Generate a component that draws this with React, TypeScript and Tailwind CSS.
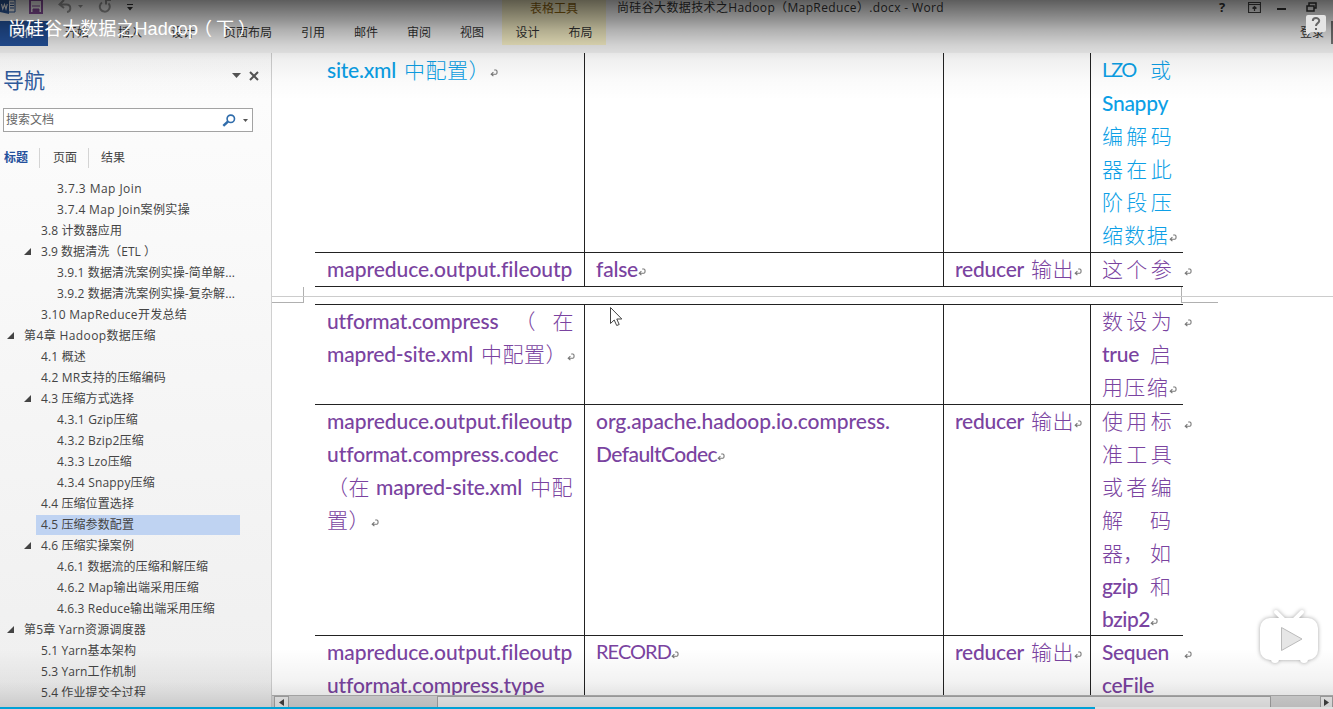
import React, { useLayoutEffect, useRef, useState } from "react";

/** Inline run whose tracking is adjusted so that it spans exactly `w` pixels. */
function Run({ w, children, cls = "" }: { w?: number; children: string; cls?: string }) {
  const ref = useRef<HTMLSpanElement>(null);
  const [ls, setLs] = useState(0);
  useLayoutEffect(() => {
    if (!ref.current || !w) return;
    setLs((w - ref.current.getBoundingClientRect().width) / children.length);
  }, []);
  return (
    <span ref={ref} className={"inline-block whitespace-pre " + cls} style={w ? { letterSpacing: ls } : undefined}>
      {children}
    </span>
  );
}

function Mark({ cls = "" }: { cls?: string }) {
  return (
    <svg viewBox="0 0 8 8" className={"h-[8px] w-[8px] shrink-0 " + cls} fill="none" stroke="#777" strokeWidth="1.1">
      <path d="M4.2 1H6a1.3 1.3 0 0 1 1 1.3V4a1.3 1.3 0 0 1-1 1.2H1.5M3.4 3.2 1.2 5.2l2.2 2" />
    </svg>
  );
}

type Piece = { t: string; w?: number; gap?: number };
type LineData = { p: Piece[]; mark?: number };

const isLatin = (t: string) => /^[\x20-\x7e]+$/.test(t);

function Line({ p, mark }: LineData) {
  return (
    <div className="flex h-[33px] items-center">
      {p.map((x, i) => (
        <span key={i} className="flex">
          {x.gap ? <i style={{ width: x.gap }} /> : null}
          <Run w={x.w} cls={/^[A-Z]{3}/.test(x.t) ? "text-[20px]" : isLatin(x.t) ? "font-medium" : "font-light"}>{x.t}</Run>
        </span>
      ))}
      {mark !== undefined && (
        <span className="flex pt-[7px]">
          <i style={{ width: mark }} />
          <Mark />
        </span>
      )}
    </div>
  );
}

const L = (t: string, w?: number, mark?: number): LineData => ({ p: [{ t, w }], mark });

type RowData = { h: string; pt: string; cls?: string; cells: LineData[][]; end?: string };

const rows: RowData[] = [
  {
    h: "h-[200px]", pt: "pt-0", cls: "text-[#0c9fe6] border-b",
    cells: [
      [{ p: [{ t: "site.xml", w: 69 }, { t: "中配置）", w: 86, gap: 8 }], mark: 0 }],
      [], [],
      [
        { p: [{ t: "LZO", w: 34 }, { t: "或", gap: 14 }] },
        L("Snappy", 66), L("编解码", 73), L("器在此", 73), L("阶段压", 73), L("缩数据", 67, 0),
      ],
    ],
  },
  {
    h: "h-[34px]", pt: "-mt-px", cls: "text-[#7a43a0] border-b",
    cells: [[L("mapreduce.output.fileoutp", 245)], [L("false", 42, 0)], [{ p: [{ t: "reducer", w: 69 }, { t: "输出", w: 43, gap: 7 }], mark: 0 }], [L("这个参", 73)]],
    end: "mt-[15px]",
  },
  {
    h: "h-[101px]", pt: "-mt-px", cls: "text-[#7a43a0] border-y",
    cells: [
      [{ p: [{ t: "utformat.compress", w: 171 }, { t: "（", gap: 16 }, { t: "在", gap: 17 }] }, { p: [{ t: "mapred-site.xml", w: 146 }, { t: "中配置）", w: 86, gap: 8 }], mark: 0 }],
      [], [],
      [L("数设为", 73), { p: [{ t: "true", w: 37 }, { t: "启", gap: 11 }] }, L("用压缩", 67, 0)],
    ],
    end: "mt-[15px]",
  },
  {
    h: "h-[231px]", pt: "-mt-px", cls: "text-[#7a43a0] border-b",
    cells: [
      [L("mapreduce.output.fileoutp", 245), L("utformat.compress.codec", 231), { p: [{ t: "（在", w: 43 }, { t: "mapred-site.xml", w: 146, gap: 6 }, { t: "中配", w: 43, gap: 8 }] }, L("置）", 43, 1)],
      [L("org.apache.hadoop.io.compress.", 294), L("DefaultCodec", 121, 0)],
      [{ p: [{ t: "reducer", w: 69 }, { t: "输出", w: 43, gap: 7 }], mark: 0 }],
      [L("使用标", 73), L("准工具", 73), L("或者编", 73), { p: [{ t: "解" }, { t: "码", gap: 27 }] }, { p: [{ t: "器，" }, { t: "如", gap: 6 }] }, { p: [{ t: "gzip", w: 36 }, { t: "和", gap: 12 }] }, L("bzip2", 48, 0)],
    ],
    end: "mt-[16px]",
  },
  {
    h: "h-[60px]", pt: "-mt-px", cls: "text-[#7a43a0]",
    cells: [
      [L("mapreduce.output.fileoutp", 245), L("utformat.compress.type", 217)],
      [L("RECORD", 75, 0)],
      [{ p: [{ t: "reducer", w: 69 }, { t: "输出", w: 43, gap: 7 }], mark: 0 }],
      [L("Sequen", 67), L("ceFile", 52)],
    ],
    end: "mt-[15px]",
  },
];

const colCls = [
  "w-[270px] border-r pl-[12px]",
  "w-[359px] border-r pl-[11px]",
  "w-[147px] border-r pl-[11px]",
  "w-[92px] pl-[11px]",
];

function Row({ r }: { r: RowData }) {
  return (
    <div className={"flex shrink-0 " + r.h}>
      <div className={"flex w-[868px] shrink-0 border-[#222] " + r.cls}>
        {r.cells.map((c, i) => (
          <div key={i} className={"shrink-0 overflow-visible border-[#222] " + colCls[i] + " " + r.pt}>
            {c.map((l, j) => (
              <Line key={j} {...l} />
            ))}
          </div>
        ))}
      </div>
      {r.end && <Mark cls={"ml-[1px] " + r.end} />}
    </div>
  );
}

const nav: { d: number; t: string; w: number; open?: boolean; on?: boolean }[] = [
  { d: 3, t: "3.7.3 Map Join", w: 85 },
  { d: 3, t: "3.7.4 Map Join案例实操", w: 133 },
  { d: 2, t: "3.8 计数器应用", w: 81 },
  { d: 2, t: "3.9 数据清洗（ETL ）", w: 115, open: true },
  { d: 3, t: "3.9.1 数据清洗案例实操-简单解...", w: 178 },
  { d: 3, t: "3.9.2 数据清洗案例实操-复杂解...", w: 178 },
  { d: 2, t: "3.10 MapReduce开发总结", w: 146 },
  { d: 1, t: "第4章 Hadoop数据压缩", w: 132, open: true },
  { d: 2, t: "4.1 概述", w: 45 },
  { d: 2, t: "4.2 MR支持的压缩编码", w: 125 },
  { d: 2, t: "4.3 压缩方式选择", w: 93, open: true },
  { d: 3, t: "4.3.1 Gzip压缩", w: 81 },
  { d: 3, t: "4.3.2 Bzip2压缩", w: 87 },
  { d: 3, t: "4.3.3 Lzo压缩", w: 75 },
  { d: 3, t: "4.3.4 Snappy压缩", w: 98 },
  { d: 2, t: "4.4 压缩位置选择", w: 93 },
  { d: 2, t: "4.5 压缩参数配置", w: 93, on: true },
  { d: 2, t: "4.6 压缩实操案例", w: 93, open: true },
  { d: 3, t: "4.6.1 数据流的压缩和解压缩", w: 151 },
  { d: 3, t: "4.6.2 Map输出端采用压缩", w: 142 },
  { d: 3, t: "4.6.3 Reduce输出端采用压缩", w: 158 },
  { d: 1, t: "第5章 Yarn资源调度器", w: 122, open: true },
  { d: 2, t: "5.1 Yarn基本架构", w: 95 },
  { d: 2, t: "5.3 Yarn工作机制", w: 95 },
  { d: 2, t: "5.4 作业提交全过程", w: 105 },
];

const indent: Record<number, string> = { 1: "ml-[3px]", 2: "ml-[20px]", 3: "ml-[36px]" };

function NavPane() {
  return (
    <aside className="flex w-[272px] shrink-0 flex-col overflow-hidden border-r border-[#d0d0d0] bg-linear-to-b from-[#fdfdfd] to-[#efefef] text-[12px] text-[#444]">
      <div className="flex h-[54px] shrink-0 items-center pl-[3px]">
        <h1 className="w-[229px] text-[21px] leading-none text-[#2f5b9d]">导航</h1>
        <svg className="mt-[-9px] h-[5px] w-[9px]" viewBox="0 0 9 5"><path d="M0 0h9L4.500 5z" fill="#555" /></svg>
        <svg className="mt-[-8px] ml-[8px] h-[10px] w-[10px]" viewBox="0 0 10 10"><path d="m1 1 8 8M9 1 1 9" stroke="#555" strokeWidth="2" /></svg>
      </div>
      <div className="ml-[3px] mt-[1px] flex h-[24px] w-[250px] shrink-0 items-center border border-[#a3a3a3] bg-white pl-[2px]">
        <span className="w-[216px] text-[#666]">搜索文档</span>
        <svg className="h-[13px] w-[14px]" viewBox="0 0 14 13" fill="none" stroke="#2f6cab"><circle cx="8.800" cy="4.800" r="3.700" strokeWidth="1.600" /><path d="M6 7.500 1.300 11.800" strokeWidth="2.400" /></svg>
        <svg className="ml-[7px] h-[3px] w-[5px]" viewBox="0 0 5 3"><path d="M0 0h5L2.500 3z" fill="#555" /></svg>
      </div>
      <div className="mt-[16px] flex h-[20px] shrink-0 items-center pl-[4px]">
        <b className="w-[35px] text-[#24509c]">标题</b>
        <span className="flex h-full w-[49px] items-center border-l border-[#d4d4d4] pl-[13px]">页面</span>
        <span className="flex h-full items-center border-l border-[#d4d4d4] pl-[12px]">结果</span>
      </div>
      <ul className="mt-[10px] h-[519px] shrink-0 overflow-hidden">
        {nav.map((n) => (
          <li key={n.t} className="flex h-[21px] items-center">
            <span className={"flex w-[17px] shrink-0 " + indent[n.d]}>
              {n.open && <svg className="ml-[4px] h-[7px] w-[7px]" viewBox="0 0 7 7"><path d="M7 0v7H0z" fill="#444" /></svg>}
            </span>
            <span className={"-ml-px flex h-[20px] items-center pl-[5px] " + (n.on ? "w-[204px] bg-[#bfd3f2]" : "")}>
              <Run w={n.w}>{n.t}</Run>
            </span>
          </li>
        ))}
      </ul>
    </aside>
  );
}

function Ribbon() {
  const tabs = ["引用", "邮件", "审阅", "视图"];
  return (
    <header className="flex h-[53px] shrink-0 bg-[#f4f4f4] text-[12px] text-[#333]">
      <div className="flex w-[502px] shrink-0 flex-col">
        <div className="flex h-[21px] items-start">
          <svg className="h-[14px] w-[16px]" viewBox="0 0 16 14"><path d="M8 0h7v12H8z" fill="#fff" stroke="#2b579a" /><path d="M10 3h4M10 5.500h4M10 8h4" stroke="#2b579a" /><path d="M0 0 9 -1v15L0 12z" fill="#2b579a" /><path d="m1.500 4 1.300 5L4.500 4.500 6 9l1.300-5" stroke="#fff" fill="none" strokeWidth="1.100" /></svg>
          <svg className="ml-[13px] h-[14px] w-[14px]" viewBox="0 0 14 14"><path d="M1 0h12v13H1z" fill="none" stroke="#8a4f9e" strokeWidth="2" /><path d="M3 6h8M4 9h6v4H4z" fill="#8a4f9e" stroke="#8a4f9e" /></svg>
          <svg className="ml-[15px] h-[13px] w-[14px]" viewBox="0 0 14 13" fill="none" stroke="#999" strokeWidth="2"><path d="M6 0 1.500 4.500 6 8M2 4.500h6.500c5 0 5 7 .5 7.500" /></svg>
          <svg className="ml-[6px] mt-[5px] h-[3px] w-[5px]" viewBox="0 0 5 3"><path d="M0 0h5L2.500 3z" fill="#999" /></svg>
          <svg className="ml-[15px] h-[13px] w-[14px]" viewBox="0 0 14 13" fill="none" stroke="#999" strokeWidth="2"><path d="M4 2.500a5 5 0 1 0 6.500.8M8 4.500V0h5" /></svg>
          <svg className="ml-[15px] mt-[4px] h-[7px] w-[6px]" viewBox="0 0 6 7"><path d="M0 0h6v1H0zM0 3h6L3 6.500z" fill="#333" /></svg>
        </div>
        <nav className="flex h-[25px] items-start leading-[24px] [&>span]:shrink-0">
          <span className="flex h-full w-[48px] items-start justify-center bg-[#24529c] text-[#fff]">文件</span>
          <span className="w-[53px] pl-[17px]">开始</span>
          <span className="w-[53px] pl-[17px]">插入</span>
          <span className="w-[53px] pl-[17px]">设计</span>
          <span className="w-[94px] pl-[17px]">页面布局</span>
          {tabs.map((t) => <span key={t} className="w-[53px]">{t}</span>)}
        </nav>
      </div>
      <div className="flex h-[45px] w-[104px] shrink-0 flex-col items-center bg-[#f6efc6]">
        <span className="h-[24px] leading-[17px] text-[#8a6210]">表格工具</span>
        <div className="flex gap-[29px] leading-[17px]"><span>设计</span><span>布局</span></div>
      </div>
      <div className="flex h-[16px] flex-1 items-center pl-[11px]">
        <Run w={327}>尚硅谷大数据技术之Hadoop（MapReduce）.docx - Word</Run>
      </div>
      <div className="flex w-[115px] flex-col">
        <div className="flex h-[14px] items-center">
          <b className="w-[30px] pl-px text-[13px] leading-[14px]">?</b>
          <svg className="h-[11px] w-[13px]" viewBox="0 0 13 11" fill="none" stroke="#444"><path d="M.5.5h12v10H.5zM.5 2.500h12M6.500 9V4.500M4.500 6.500l2-2 2 2" strokeWidth="1.200" /></svg>
          <i className="ml-[16px] mt-[4px] h-[2px] w-[9px] bg-[#333]" />
          <svg className="ml-[20px] h-[10px] w-[11px]" viewBox="0 0 11 10" fill="none" stroke="#333"><path d="M1 4h7v5H1zM3 3.500V1h7v5H8.500" strokeWidth="1.500" /></svg>
        </div>
        <div className="mt-[7px] flex h-[23px] items-center pl-[82px]"><span className="w-[31px] whitespace-nowrap">登录</span><i className="h-full w-[2px] bg-[#777]" /></div>
      </div>
    </header>
  );
}

function Document() {
  return (
    <main className="flex flex-1 flex-col overflow-hidden bg-white">
      <div className="flex h-[642px] shrink-0 flex-col overflow-hidden font-[Lato,'Noto_Sans_CJK_SC',sans-serif] text-[21px] leading-[33px]">
        <div className="ml-[43px]"><Row r={rows[0]} /></div>
        <div className="ml-[43px]"><Row r={rows[1]} /></div>
        <div className="flex h-[17px] shrink-0 flex-col">
          <div className="flex h-[16px]">
            <div className="w-[32px] border-b border-r border-[#b0b0b0]" />
            <div className="w-[878px] border-r border-[#b0b0b0]" />
            <div className="w-[36px] border-b border-[#b0b0b0]" />
          </div>
          <div className="relative -top-[7px] h-px shrink-0 bg-[#ccc]" />
        </div>
        {rows.slice(2).map((r, i) => (
          <div key={i} className="ml-[43px]"><Row r={r} /></div>
        ))}
      </div>
      <div className="flex h-[14px] shrink-0 border-t border-[#b5b5b5] bg-[#dcdcdc] pl-[2px]">
        <div className="flex w-[15px] items-center justify-center border border-[#aaa] bg-[#f5f5f5]"><svg className="h-[7px] w-[5px]" viewBox="0 0 5 7"><path d="M5 0v7L0 3.500z" fill="#444" /></svg></div>
        <div className="ml-[148px] w-[834px] border border-[#aaa] bg-[#f8f8f8]" />
        <div className="ml-auto flex w-[13px] items-center justify-center border border-[#aaa] bg-[#f5f5f5]"><svg className="h-[7px] w-[5px]" viewBox="0 0 5 7"><path d="M0 0v7l5-3.500z" fill="#444" /></svg></div>
      </div>
    </main>
  );
}

function PlayerOverlay() {
  return (
    <div className="absolute inset-0">
      <div className="absolute inset-x-0 top-0 h-[100px] bg-[linear-gradient(to_bottom,rgba(0,0,0,.62)_0%,rgba(0,0,0,.4)_20%,rgba(0,0,0,.28)_30%,rgba(0,0,0,.14)_45%,rgba(0,0,0,.06)_60%,rgba(0,0,0,.02)_80%,transparent_100%)]" />
      <div className="absolute inset-x-0 bottom-0 h-[60px] bg-[linear-gradient(to_bottom,transparent,rgba(0,0,0,.05)_55%,rgba(0,0,0,.16))]" />
      <div className="absolute left-[8px] top-[17px] flex font-['Liberation_Sans','Noto_Sans_CJK_SC',sans-serif] text-[18px] leading-[24px] text-white">
        <Run w={190}>尚硅谷大数据之Hadoop</Run>
        <span className="-ml-[4px] w-[22px]">（</span>
        <span className="w-[20px]">下</span>
        <span className="pl-[2px]">）</span>
      </div>
      <svg className="absolute left-[1305px] top-[14px] h-[22px] w-[22px]" viewBox="0 0 22 22"><path d="M3 1h16a2 2 0 0 1 2 2v13a2 2 0 0 1-2 2H6l-4 3.500L1 18V3a2 2 0 0 1 2-2z" fill="#e4e4e4" /><path d="M7.800 7c0-4 6.400-4 6.400-.2 0 2.500-3.200 2.200-3.200 5.200M11 14v2" stroke="#666" strokeWidth="2" fill="none" /></svg>
      <svg className="absolute left-[609px] top-[306px] h-[22px] w-[14px]" viewBox="0 0 14 22"><path d="M1.500 1.500v16l3.700-3.500 2.500 5.500 2.500-1-2.400-5.500h5z" fill="#fff" stroke="#444" /></svg>
      <svg className="absolute left-[1254px] top-[606px] h-[62px] w-[70px] drop-shadow-[0_0_2px_rgba(0,0,0,.35)]" viewBox="0 0 70 62"><path d="m22 6 9 9M48 6l-9 9" stroke="#fff" strokeWidth="4" strokeLinecap="round" /><rect x="6" y="12" width="58" height="42" rx="10" fill="#fff" /><circle cx="21" cy="53" r="4" fill="#fff" /><circle cx="50" cy="53" r="4" fill="#fff" /><path d="M27.500 21.500v23L48 33z" fill="#e6e6e6" stroke="#bbb" /></svg>
      <div className="absolute bottom-0 left-0 h-[2px] w-full bg-[#e0e0e0]"><div className="h-full w-[1095px] bg-[#00a1d6]" /></div>
    </div>
  );
}

export default function App() {
  return (
    <div className="relative flex h-[709px] w-[1333px] flex-col overflow-hidden bg-white font-['Open_Sans','Noto_Sans_CJK_SC',sans-serif]">
      <Ribbon />
      <div className="flex flex-1 overflow-hidden">
        <NavPane />
        <Document />
      </div>
      <PlayerOverlay />
    </div>
  );
}
